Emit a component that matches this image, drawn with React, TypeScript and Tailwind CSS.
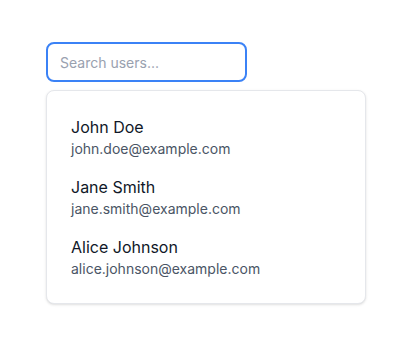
const users = [
  { name: "John Doe", email: "john.doe@example.com" },
  { name: "Jane Smith", email: "jane.smith@example.com" },
  { name: "Alice Johnson", email: "alice.johnson@example.com" },
];

export default function App() {
  return (
    <div className="min-h-screen bg-white pt-[42px] font-['Inter',sans-serif]">
      <div className="mx-auto w-80">
        <input
          autoFocus
          type="text"
          placeholder="Search users..."
          className="h-10 w-[201px] rounded-lg border-2 border-[#3b82f6] px-3 text-sm text-gray-900 placeholder:text-gray-400 outline-none"
        />
        <ul className="mt-2 rounded-lg border border-gray-200 bg-white p-4 shadow-sm">
          {users.map((user) => (
            <li key={user.email} className="px-2 py-2">
              <p className="text-base leading-6 text-gray-900">{user.name}</p>
              <p className="text-sm leading-5 text-gray-600">{user.email}</p>
            </li>
          ))}
        </ul>
      </div>
    </div>
  );
}
